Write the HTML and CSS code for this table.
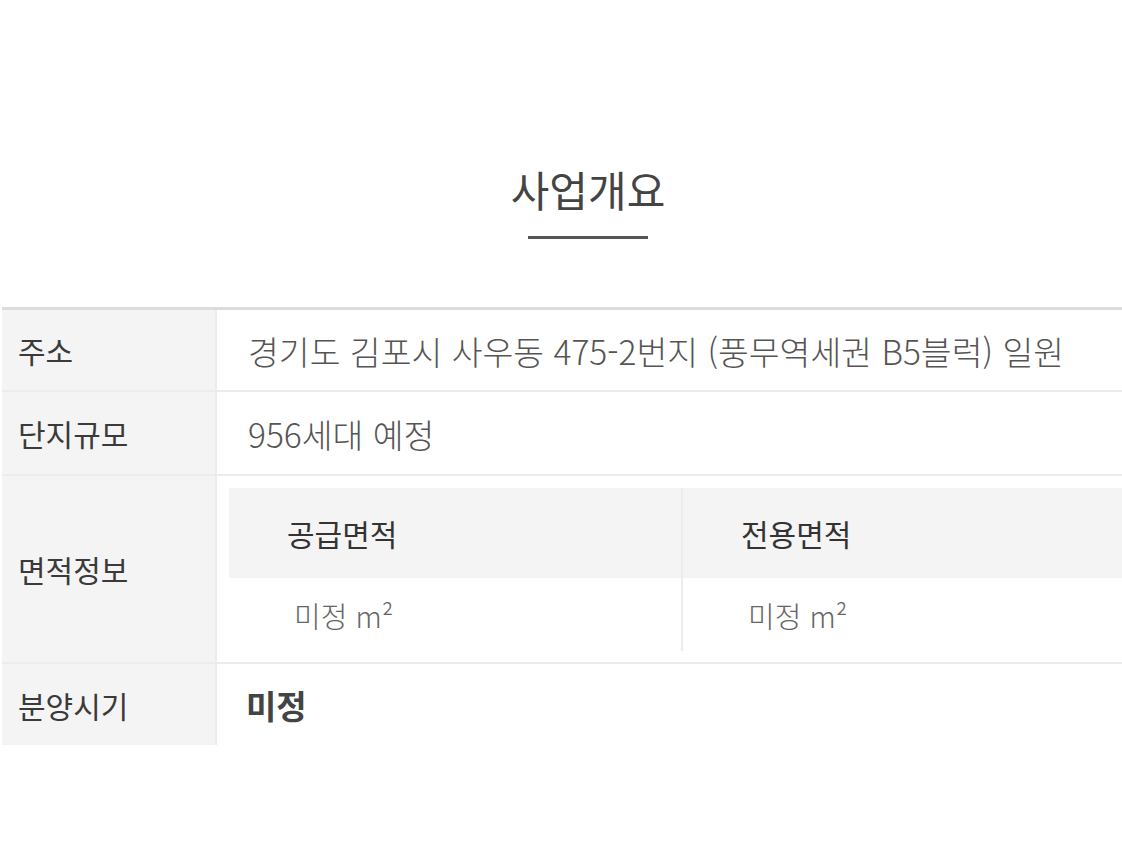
FILE: index.html
```html
<!DOCTYPE html>
<html lang="ko">
<head>
<meta charset="utf-8">
<title>사업개요</title>
<link rel="stylesheet" href="styles.css">
</head>
<body>
<div class="wrap">
  <div class="head">
    <h2 class="title">사업개요</h2>
    <span class="bar"></span>
  </div>
  <div class="table">
    <div class="row r1">
      <div class="th">주소</div>
      <div class="td">경기도 김포시 사우동 475-2번지 (풍무역세권 B5블럭) 일원</div>
    </div>
    <div class="row r2">
      <div class="th">단지규모</div>
      <div class="td">956세대 예정</div>
    </div>
    <div class="row r3">
      <div class="th">면적정보</div>
      <div class="td inner-wrap">
        <div class="inner">
          <div class="col">
            <div class="ih">공급면적</div>
            <div class="id">미정 m²</div>
          </div>
          <div class="col">
            <div class="ih">전용면적</div>
            <div class="id">미정 m²</div>
          </div>
        </div>
      </div>
    </div>
    <div class="row r4">
      <div class="th">분양시기</div>
      <div class="td strong">미정</div>
    </div>
  </div>
</div>
</body>
</html>
```

FILE: styles.css
```css
html, body {
  margin: 0;
  padding: 0;
  background: #fff;
  overflow: hidden;
}
body {
  font-family: "Noto Sans CJK KR", "Noto Sans", sans-serif;
  color: #444;
}
.wrap {
  width: 1172px;
  margin-left: 2px;
}
.head {
  display: flex;
  flex-direction: column;
  align-items: center;
  padding-top: 165px;
}
.title {
  margin: 0;
  font-size: 42px;
  line-height: 48px;
  font-weight: 400;
  color: #444;
  letter-spacing: 0;
}
.bar {
  display: block;
  width: 120px;
  height: 3px;
  background: #555;
  margin-top: 23px;
}
.table {
  margin-top: 68px;
  border-top: 3px solid #dcdcdc;
}
.row {
  display: flex;
  border-bottom: 2px solid #ececec;
}
.row.r4 {
  border-bottom: 0;
}
.th {
  width: 215px;
  flex: none;
  background: #f4f4f4;
  border-right: 2px solid #ececec;
  display: flex;
  align-items: center;
  padding-left: 16px;
  box-sizing: border-box;
  font-size: 30px;
  font-weight: 400;
  color: #3a3a3a;
}
.td {
  flex: 1;
  display: flex;
  align-items: center;
  padding-left: 31px;
  font-size: 33.5px;
  font-weight: 300;
  color: #555;
  white-space: nowrap;
}
.r1 { height: 80px; }
.r2 { height: 82px; }
.r3 { height: 186px; }
.r4 { height: 81px; }
.td.strong {
  font-weight: 700;
  color: #444;
  font-size: 33px;
  padding-left: 29px;
}
.td.inner-wrap {
  padding: 12px 12px 11px 12px;
  align-items: stretch;
}
.inner {
  display: flex;
  flex: 1;
}
.col {
  display: flex;
  flex-direction: column;
  width: 452px;
  flex: none;
}
.col + .col {
  flex: 1;
  border-left: 2px solid #ececec;
}
.ih {
  height: 90px;
  background: #f4f4f4;
  display: flex;
  align-items: center;
  padding-left: 58px;
  font-size: 30px;
  font-weight: 400;
  color: #333;
}
.id {
  flex: 1;
  display: flex;
  align-items: center;
  padding-left: 65px;
  font-size: 29px;
  font-weight: 300;
  color: #666;
}
```
